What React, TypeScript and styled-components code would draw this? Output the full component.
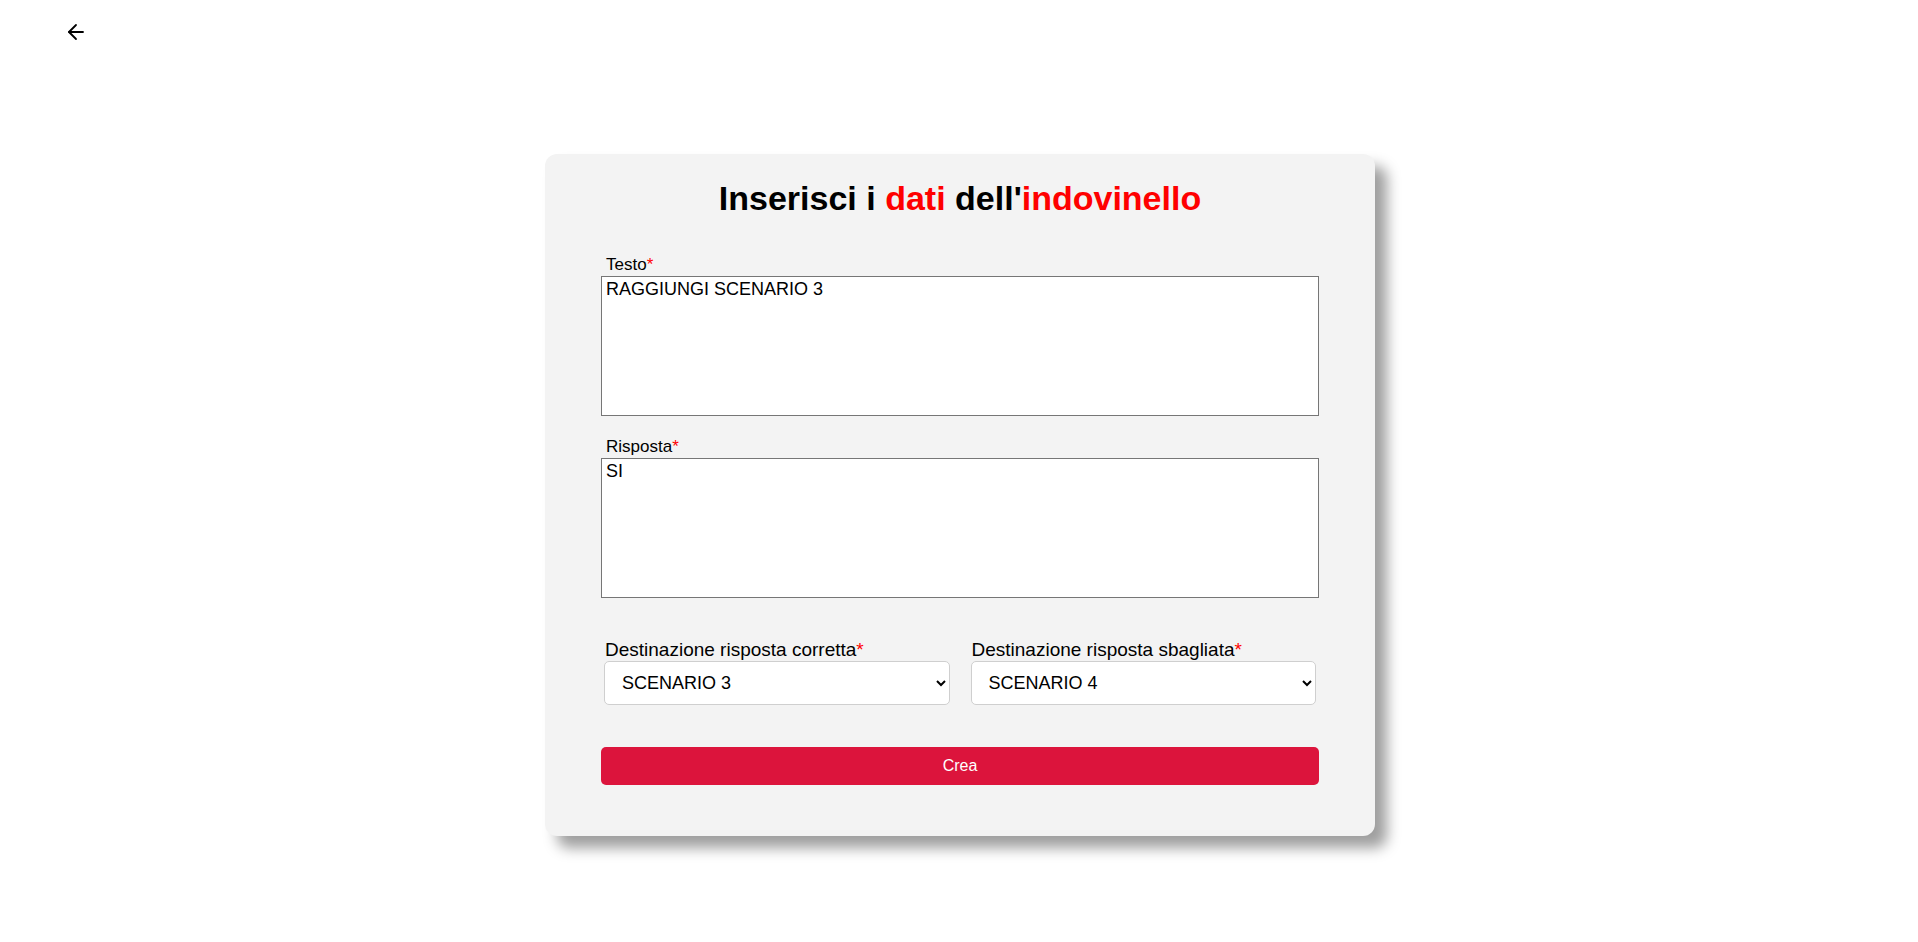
import styled, { createGlobalStyle } from "styled-components";
import { useState } from "react";
import { ArrowLeft } from "lucide-react";

const GlobalStyle = createGlobalStyle`
    body {
        margin: 0;
        background: #ffffff;
        font-family: "Liberation Sans", Arial, sans-serif;
        color: #000;
    }
`;

const Page = styled.div`
    min-height: 942px;
    display: flex;
    flex-direction: column;
    padding-left: 2px;
`;

const TopBar = styled.div`
    height: 64px;
    padding: 20px 0 0 62px;
    box-sizing: border-box;

    button {
        border: none;
        background: none;
        padding: 0;
        cursor: pointer;
        display: flex;
        color: #000;
    }
`;

const StyledCard = styled.form`
    width: 830px;
    box-sizing: border-box;
    margin: 90px auto 0;
    padding: 25px 56px 51px;
    background-color: #f3f3f3;
    border-radius: 12px;
    box-shadow: 12px 12px 14px rgba(0, 0, 0, 0.38);
    display: flex;
    flex-direction: column;
`;

const Title = styled.h1`
    margin: 0 0 37px;
    text-align: center;
    font-size: 34px;
    font-weight: bold;
    line-height: normal;

    span {
        color: #ff0000;
    }
`;

const Field = styled.div<{ $gap: number }>`
    display: flex;
    flex-direction: column;
    gap: ${p => p.$gap}px;
    margin-bottom: 21px;
`;

const Label = styled.label<{ $size: number; $indent: number }>`
    font-size: ${p => p.$size}px;
    padding-left: ${p => p.$indent}px;
    line-height: normal;

    em {
        font-style: normal;
        color: #ff0000;
    }
`;

const TextBox = styled.textarea`
    height: 140px;
    box-sizing: border-box;
    border: 1px solid #767676;
    padding: 2px 4px;
    font-family: "Liberation Sans", Arial, sans-serif;
    font-size: 18px;
    background: #fff;
    resize: none;
    outline: none;
`;

const SelectRow = styled.div`
    display: flex;
    gap: 21px;
    padding: 20px 3px 0;
    margin-bottom: 42px;
`;

const SelectCol = styled.div`
    flex: 1;
    display: flex;
    flex-direction: column;
    gap: 0;
`;

const Select = styled.select`
    height: 44px;
    box-sizing: border-box;
    padding: 0 10px 0 13px;
    border: 1px solid #cfcfcf;
    border-radius: 5px;
    background: #fff;
    font-family: "Liberation Sans", Arial, sans-serif;
    font-size: 18px;
    color: #000;
`;

const CreateButton = styled.button`
    height: 38px;
    border: none;
    border-radius: 5px;
    background-color: #dc143c;
    color: #fff;
    font-family: "Liberation Sans", Arial, sans-serif;
    font-size: 16px;
    cursor: pointer;
`;

const scenari = ["SCENARIO 1", "SCENARIO 2", "SCENARIO 3", "SCENARIO 4"];

function App() {
    const [testo, setTesto] = useState("RAGGIUNGI SCENARIO 3");
    const [risposta, setRisposta] = useState("SI");
    const [corretta, setCorretta] = useState("SCENARIO 3");
    const [sbagliata, setSbagliata] = useState("SCENARIO 4");

    return (
        <Page>
            <GlobalStyle />
            <TopBar>
                <button type="button" aria-label="Indietro">
                    <ArrowLeft size={24} strokeWidth={1.8} />
                </button>
            </TopBar>
            <StyledCard onSubmit={e => e.preventDefault()}>
                <Title>
                    Inserisci i <span>dati</span> dell'<span>indovinello</span>
                </Title>
                <Field $gap={1}>
                    <Label $size={17} $indent={5}>Testo<em>*</em></Label>
                    <TextBox value={testo} onChange={e => setTesto(e.target.value)} />
                </Field>
                <Field $gap={1}>
                    <Label $size={17} $indent={5}>Risposta<em>*</em></Label>
                    <TextBox value={risposta} onChange={e => setRisposta(e.target.value)} />
                </Field>
                <SelectRow>
                    <SelectCol>
                        <Label $size={19} $indent={1}>Destinazione risposta corretta<em>*</em></Label>
                        <Select value={corretta} onChange={e => setCorretta(e.target.value)}>
                            {scenari.map(s => <option key={s}>{s}</option>)}
                        </Select>
                    </SelectCol>
                    <SelectCol>
                        <Label $size={19} $indent={1}>Destinazione risposta sbagliata<em>*</em></Label>
                        <Select value={sbagliata} onChange={e => setSbagliata(e.target.value)}>
                            {scenari.map(s => <option key={s}>{s}</option>)}
                        </Select>
                    </SelectCol>
                </SelectRow>
                <CreateButton type="submit">Crea</CreateButton>
            </StyledCard>
        </Page>
    );
}

export default App;
